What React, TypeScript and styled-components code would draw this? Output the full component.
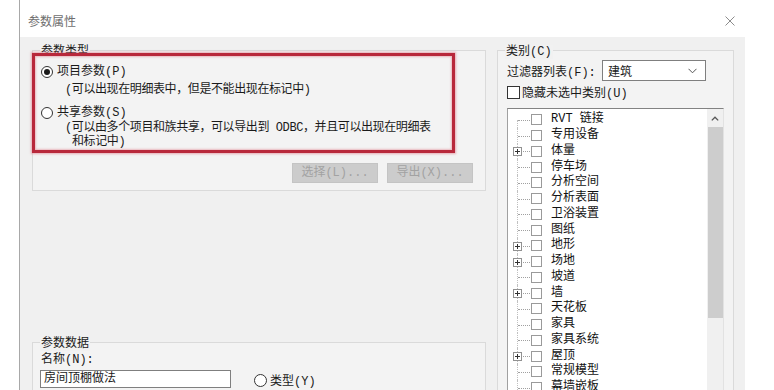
import React from "react";
import styled, { createGlobalStyle } from "styled-components";

const GlobalStyle = createGlobalStyle`
  html, body { margin: 0; padding: 0; background: #ffffff; }
  body {
    font-family: "Liberation Mono", "Noto Sans CJK SC", monospace;
    font-size: 12px;
    color: #1a1a1a;
  }
  * { box-sizing: border-box; }
`;

const Page = styled.div`
  width: 774px;
  height: 390px;
  overflow: hidden;
  background: #ffffff;
  padding-left: 19px;
  display: flex;
`;

const Dialog = styled.div`
  width: 726px;
  height: 390px;
  border-left: 1px solid #a8a8a8;
  display: flex;
  flex-direction: column;
`;

const TitleBar = styled.div`
  height: 37px;
  flex: none;
  background: #ffffff;
  display: flex;
  align-items: center;
  justify-content: space-between;
  padding: 4px 10px 0 8px;
`;

const Title = styled.span`
  font-family: "Noto Sans CJK SC", sans-serif;
  font-size: 12px;
  line-height: 14px;
  color: #6e6e6e;
`;

const CloseIcon = styled.svg`
  width: 10px;
  height: 10px;
  display: block;
`;

const Body = styled.div`
  flex: 1;
  background: #f0f0f0;
  display: flex;
  gap: 11px;
  padding: 13px 11px 0 12px;
  overflow: hidden;
`;

const LeftCol = styled.div`
  width: 454px;
  flex: none;
  display: flex;
  flex-direction: column;
`;

const RightCol = styled.div`
  width: 237px;
  flex: none;
  display: flex;
  flex-direction: column;
`;

const GroupBox = styled.div<{ $h: number; $mt?: number; $pad: string }>`
  position: relative;
  flex: none;
  height: ${(p) => p.$h}px;
  margin-top: ${(p) => p.$mt ?? 0}px;
  border: 1px solid #dadada;
  background: #f3f3f3;
  padding: ${(p) => p.$pad};
  display: flex;
  flex-direction: column;
`;

const Legend = styled.span`
  position: absolute;
  top: -6px;
  left: 7px;
  padding: 0 1px;
  line-height: 14px;
  background: #f1f1f1;
  color: #1a1a1a;
`;

const Annotation = styled.div`
  position: absolute;
  left: -1px;
  top: 2px;
  width: 423px;
  height: 100px;
  border: 3px solid #b8283b;
  box-shadow: 0 0 2px 1px rgba(220, 110, 125, 0.55),
    inset 0 0 2px 1px rgba(220, 110, 125, 0.45);
  pointer-events: none;
`;

const RadioRow = styled.div<{ $mt?: number }>`
  display: flex;
  align-items: center;
  gap: 4px;
  height: 16px;
  margin-top: ${(p) => p.$mt ?? 0}px;
  line-height: 16px;
`;

const RadioCircle = styled.span<{ $size?: number }>`
  width: ${(p) => p.$size ?? 12}px;
  height: ${(p) => p.$size ?? 12}px;
  flex: none;
  border-radius: 50%;
  border: 1px solid #333333;
  background: #ffffff;
  display: flex;
  align-items: center;
  justify-content: center;
`;

const RadioDot = styled.span`
  width: 6px;
  height: 6px;
  border-radius: 50%;
  background: #1a1a1a;
`;

const Desc = styled.div<{ $mt?: number }>`
  margin-top: ${(p) => p.$mt ?? 0}px;
  padding-left: 31px;
  text-indent: -7px;
  line-height: 14px;
  letter-spacing: -0.4px;
  white-space: nowrap;
`;

const ButtonRow = styled.div`
  display: flex;
  justify-content: flex-end;
  gap: 9px;
  margin-top: 14px;
`;

const DisabledButton = styled.button`
  width: 86px;
  height: 20px;
  padding: 0;
  background: #cccccc;
  border: 1px solid #c4c4c4;
  color: #a2a2a2;
  font-family: inherit;
  font-size: 12px;
  line-height: 18px;
`;

const FieldLabel = styled.div`
  line-height: 14px;
`;

const InputRow = styled.div`
  display: flex;
  align-items: center;
  margin-top: 1px;
  margin-left: -1px;
`;

const TextBox = styled.div`
  width: 191px;
  height: 18px;
  border: 1px solid #7f7f7f;
  background: #ffffff;
  padding-left: 3px;
  line-height: 16px;
`;

const TypeRadio = styled.div`
  display: flex;
  align-items: center;
  gap: 3px;
  margin-left: 23px;
  margin-top: 3px;
`;

const FilterRow = styled.div`
  display: flex;
  align-items: center;
  height: 21px;
`;

const FilterLabel = styled.span`
  width: 95px;
  flex: none;
`;

const Select = styled.div`
  width: 104px;
  height: 21px;
  border: 1px solid #7f7f7f;
  background: #ffffff;
  display: flex;
  align-items: center;
  justify-content: space-between;
  padding: 0 8px 0 5px;
`;

const CheckRow = styled.div`
  display: flex;
  align-items: center;
  gap: 2px;
  height: 14px;
  margin-top: 4px;
`;

const CheckBox = styled.span<{ $size: number; $border: string }>`
  width: ${(p) => p.$size}px;
  height: ${(p) => p.$size}px;
  flex: none;
  border: 1px solid ${(p) => p.$border};
  background: #ffffff;
`;

const Tree = styled.div`
  margin-top: 9px;
  height: 300px;
  display: flex;
  background: #ffffff;
  border-top: 1px solid #828282;
  border-left: 1px solid #a0a0a0;
  border-right: 1px solid #e2e2e2;
`;

const TreeList = styled.div`
  flex: 1;
  padding-top: 3px;
  display: flex;
  flex-direction: column;
`;

const TreeRow = styled.div`
  height: 15.75px;
  flex: none;
  display: flex;
  align-items: center;
  padding-left: 5px;
`;

const Connector = styled.span<{ $first: boolean }>`
  position: relative;
  width: 18px;
  height: 100%;
  flex: none;
  &::before {
    content: "";
    position: absolute;
    left: 4px;
    top: ${(p) => (p.$first ? "50%" : "0")};
    bottom: 0;
    border-left: 1px dotted #c0c0c0;
  }
  &::after {
    content: "";
    position: absolute;
    left: 5px;
    right: 1px;
    top: 50%;
    border-top: 1px dotted #a0a0a0;
  }
`;

const Expander = styled.svg`
  position: absolute;
  left: 0;
  top: 50%;
  margin-top: -4px;
  width: 9px;
  height: 9px;
  z-index: 1;
`;

const TreeLabel = styled.span`
  margin-left: 9px;
  line-height: 15px;
  white-space: nowrap;
  color: #111111;
`;

const ScrollBar = styled.div`
  width: 16px;
  flex: none;
  background: #f0f0f0;
  display: flex;
  flex-direction: column;
  align-items: center;
`;

const ScrollArrow = styled.div`
  height: 18px;
  width: 100%;
  display: flex;
  align-items: center;
  justify-content: center;
`;

const ScrollThumb = styled.div<{ $h: number }>`
  width: 15px;
  height: ${(p) => p.$h}px;
  background: #cdcdcd;
`;

const categories: [string, boolean][] = [
  ["RVT 链接", false],
  ["专用设备", false],
  ["体量", true],
  ["停车场", false],
  ["分析空间", false],
  ["分析表面", false],
  ["卫浴装置", false],
  ["图纸", false],
  ["地形", true],
  ["场地", true],
  ["坡道", false],
  ["墙", true],
  ["天花板", false],
  ["家具", false],
  ["家具系统", false],
  ["屋顶", true],
  ["常规模型", false],
  ["幕墙嵌板", false],
];

export default function App() {
  return (
    <>
      <GlobalStyle />
      <Page>
        <Dialog>
          <TitleBar>
            <Title>参数属性</Title>
            <CloseIcon viewBox="0 0 10 10">
              <path d="M0.5 0.5 L9.5 9.5 M9.5 0.5 L0.5 9.5" stroke="#8c8c8c" strokeWidth="1" fill="none" />
            </CloseIcon>
          </TitleBar>
          <Body>
            <LeftCol>
              <GroupBox $h={141} $pad="13px 12px 7px 8px">
                <Legend>参数类型</Legend>
                <RadioRow>
                  <RadioCircle>
                    <RadioDot />
                  </RadioCircle>
                  <span>项目参数(P)</span>
                </RadioRow>
                <Desc $mt={3}>(可以出现在明细表中，但是不能出现在标记中)</Desc>
                <RadioRow $mt={8}>
                  <RadioCircle />
                  <span>共享参数(S)</span>
                </RadioRow>
                <Desc>
                  (可以由多个项目和族共享，可以导出到 ODBC，并且可以出现在明细表
                  <br />
                  和标记中)
                </Desc>
                <ButtonRow>
                  <DisabledButton disabled>选择(L)...</DisabledButton>
                  <DisabledButton disabled>导出(X)...</DisabledButton>
                </ButtonRow>
                <Annotation />
              </GroupBox>
              <GroupBox $h={120} $mt={151} $pad="10px 0 0 8px">
                <Legend>参数数据</Legend>
                <FieldLabel>名称(N):</FieldLabel>
                <InputRow>
                  <TextBox>房间顶棚做法</TextBox>
                  <TypeRadio>
                    <RadioCircle $size={13} />
                    <span>类型(Y)</span>
                  </TypeRadio>
                </InputRow>
              </GroupBox>
            </LeftCol>
            <RightCol>
              <GroupBox $h={400} $pad="9px 9px 0 9px">
                <Legend>类别(C)</Legend>
                <FilterRow>
                  <FilterLabel>过滤器列表(F):</FilterLabel>
                  <Select>
                    <span>建筑</span>
                    <svg width="9" height="6" viewBox="0 0 9 6">
                      <path d="M0.5 0.8 L4.5 4.8 L8.5 0.8" stroke="#555" strokeWidth="1" fill="none" />
                    </svg>
                  </Select>
                </FilterRow>
                <CheckRow>
                  <CheckBox $size={13} $border="#333333" />
                  <span>隐藏未选中类别(U)</span>
                </CheckRow>
                <Tree>
                  <TreeList>
                    {categories.map(([name, expandable], i) => (
                      <TreeRow key={name}>
                        <Connector $first={i === 0}>
                          {expandable && (
                            <Expander viewBox="0 0 9 9">
                              <rect x="0.5" y="0.5" width="8" height="8" fill="#fff" stroke="#919191" />
                              <path d="M2 4.5 H7 M4.5 2 V7" stroke="#333" strokeWidth="1" />
                            </Expander>
                          )}
                        </Connector>
                        <CheckBox $size={11} $border="#9a9a9a" />
                        <TreeLabel>{name}</TreeLabel>
                      </TreeRow>
                    ))}
                  </TreeList>
                  <ScrollBar>
                    <ScrollArrow>
                      <svg width="8" height="5" viewBox="0 0 8 5">
                        <path d="M0.8 4.4 L4 1.2 L7.2 4.4" stroke="#555" strokeWidth="1.3" fill="none" />
                      </svg>
                    </ScrollArrow>
                    <ScrollThumb $h={191} />
                  </ScrollBar>
                </Tree>
              </GroupBox>
            </RightCol>
          </Body>
        </Dialog>
      </Page>
    </>
  );
}
